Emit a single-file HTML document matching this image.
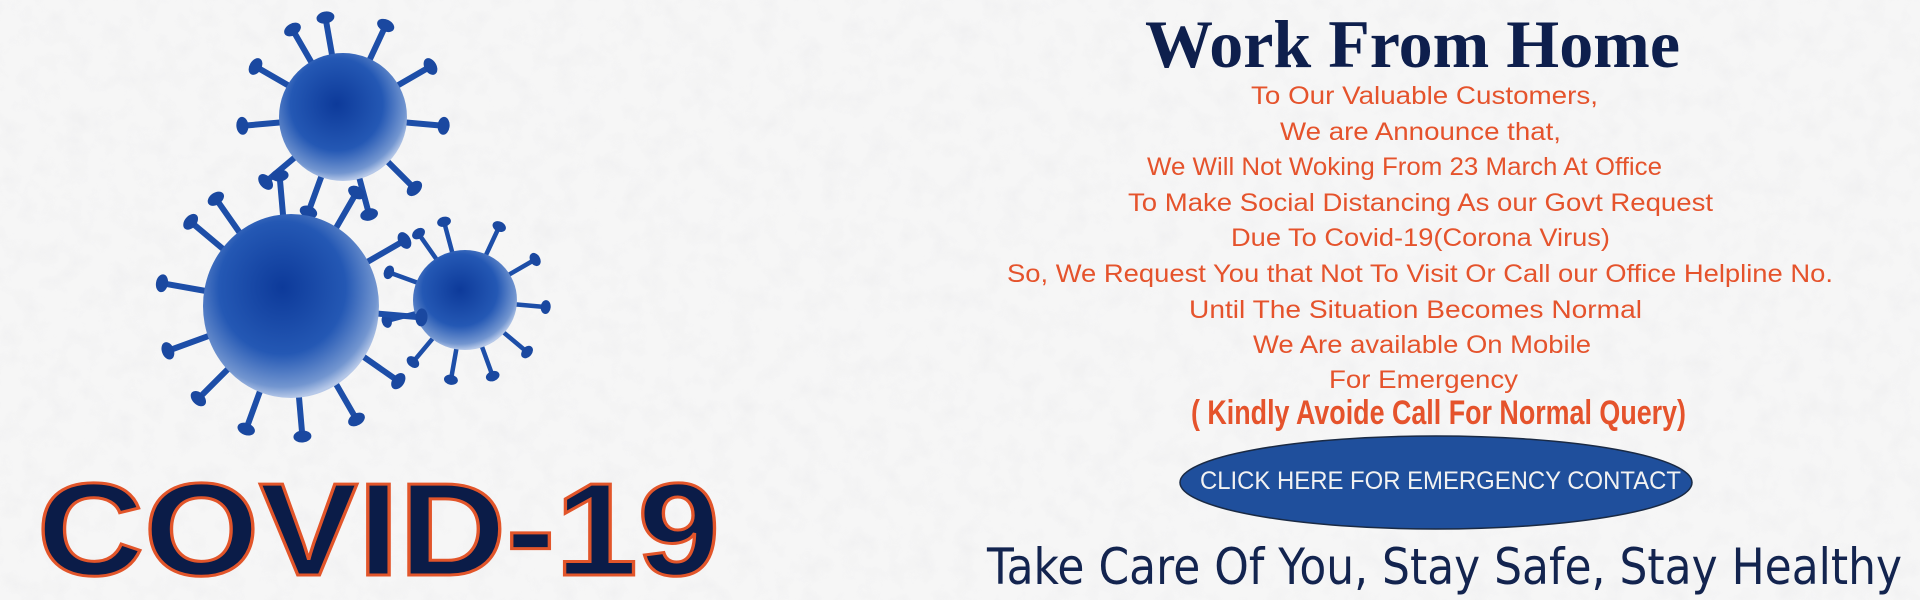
<!DOCTYPE html>
<html><head><meta charset="utf-8"><style>
html,body{margin:0;padding:0;width:1920px;height:600px;overflow:hidden;background:#f3f3f3}
svg{display:block}
</style></head><body>
<svg width="1920" height="600" viewBox="0 0 1920 600" xmlns="http://www.w3.org/2000/svg">
<defs>
<filter id="tex" x="0" y="0" width="100%" height="100%">
<feTurbulence type="fractalNoise" baseFrequency="0.045" numOctaves="3" seed="3"/>
<feColorMatrix type="matrix" values="0 0 0 0 0.86  0 0 0 0 0.86  0 0 0 0 0.87  0 0 0 -2.2 1.3"/>
</filter>
<radialGradient id="vg" cx="45%" cy="40%" r="60%">
<stop offset="0" stop-color="#0d3a9a"/>
<stop offset="0.6" stop-color="#2458b4"/>
<stop offset="0.9" stop-color="#7396d0"/>
<stop offset="1" stop-color="#b6c8e8"/>
</radialGradient>
<g id="sp"><line x1="0" y1="0" x2="0" y2="-44" stroke="#1d4ea8" stroke-width="6" stroke-linecap="round"/><ellipse cx="0" cy="-46" rx="9" ry="6" fill="#1a48a0"/></g>
<g id="spS"><line x1="0" y1="0" x2="0" y2="-34" stroke="#1d4ea8" stroke-width="4.5" stroke-linecap="round"/><ellipse cx="0" cy="-36" rx="7" ry="5" fill="#1a48a0"/></g>
</defs>
<rect width="1920" height="600" fill="#f6f6f6"/>
<rect width="1920" height="600" filter="url(#tex)" opacity="0.6"/>

<g transform="translate(343,117)">
<use href="#sp" transform="rotate(-10) translate(0,-55)"/>
<use href="#sp" transform="rotate(25) translate(0,-55)"/>
<use href="#sp" transform="rotate(60) translate(0,-55)"/>
<use href="#sp" transform="rotate(95) translate(0,-55)"/>
<use href="#sp" transform="rotate(135) translate(0,-55)"/>
<use href="#sp" transform="rotate(165) translate(0,-55)"/>
<use href="#sp" transform="rotate(200) translate(0,-55)"/>
<use href="#sp" transform="rotate(230) translate(0,-55)"/>
<use href="#sp" transform="rotate(265) translate(0,-55)"/>
<use href="#sp" transform="rotate(300) translate(0,-55)"/>
<use href="#sp" transform="rotate(330) translate(0,-55)"/>
<ellipse cx="0" cy="0" rx="64" ry="64" fill="url(#vg)"/>
</g>
<g transform="translate(465,300)">
<use href="#spS" transform="rotate(-15) translate(0,-45)"/>
<use href="#spS" transform="rotate(25) translate(0,-45)"/>
<use href="#spS" transform="rotate(60) translate(0,-45)"/>
<use href="#spS" transform="rotate(95) translate(0,-45)"/>
<use href="#spS" transform="rotate(130) translate(0,-45)"/>
<use href="#spS" transform="rotate(160) translate(0,-45)"/>
<use href="#spS" transform="rotate(190) translate(0,-45)"/>
<use href="#spS" transform="rotate(220) translate(0,-45)"/>
<use href="#spS" transform="rotate(255) translate(0,-45)"/>
<use href="#spS" transform="rotate(290) translate(0,-45)"/>
<use href="#spS" transform="rotate(325) translate(0,-45)"/>
<ellipse cx="0" cy="0" rx="52" ry="50" fill="url(#vg)"/>
</g>
<g transform="translate(291,306)">
<use href="#sp" transform="rotate(-35) translate(0,-85)"/>
<use href="#sp" transform="rotate(-5) translate(0,-85)"/>
<use href="#sp" transform="rotate(30) translate(0,-85)"/>
<use href="#sp" transform="rotate(60) translate(0,-85)"/>
<use href="#sp" transform="rotate(95) translate(0,-85)"/>
<use href="#sp" transform="rotate(125) translate(0,-85)"/>
<use href="#sp" transform="rotate(150) translate(0,-85)"/>
<use href="#sp" transform="rotate(175) translate(0,-85)"/>
<use href="#sp" transform="rotate(200) translate(0,-85)"/>
<use href="#sp" transform="rotate(225) translate(0,-85)"/>
<use href="#sp" transform="rotate(250) translate(0,-85)"/>
<use href="#sp" transform="rotate(280) translate(0,-85)"/>
<use href="#sp" transform="rotate(310) translate(0,-85)"/>
<ellipse cx="0" cy="0" rx="88" ry="92" fill="url(#vg)"/>
</g>

<text x="37" y="575" font-family="Liberation Sans, sans-serif" font-weight="900" font-size="132" fill="#0b1c48" stroke="#e2552a" stroke-width="3" textLength="683" lengthAdjust="spacingAndGlyphs">COVID-19</text>

<text x="1145" y="67" font-family="Liberation Serif, serif" font-weight="bold" font-size="68" fill="#0e1f4d" textLength="535" lengthAdjust="spacingAndGlyphs">Work From Home</text>

<g font-family="Liberation Sans, sans-serif" font-size="25" fill="#e5532c">
<text x="1251" y="104" textLength="347" lengthAdjust="spacingAndGlyphs">To Our Valuable Customers,</text>
<text x="1280" y="140" textLength="281" lengthAdjust="spacingAndGlyphs">We are Announce that,</text>
<text x="1147" y="175" textLength="515" lengthAdjust="spacingAndGlyphs">We Will Not Woking From 23  March At Office</text>
<text x="1128" y="211" textLength="585" lengthAdjust="spacingAndGlyphs">To Make Social Distancing As our Govt  Request</text>
<text x="1231" y="246" textLength="379" lengthAdjust="spacingAndGlyphs">Due To Covid-19(Corona Virus)</text>
<text x="1007" y="282" textLength="826" lengthAdjust="spacingAndGlyphs">So, We Request You that Not To Visit Or Call our Office Helpline No.</text>
<text x="1189" y="318" textLength="453" lengthAdjust="spacingAndGlyphs">Until The Situation Becomes Normal</text>
<text x="1253" y="353" textLength="338" lengthAdjust="spacingAndGlyphs">We Are available On Mobile</text>
<text x="1329" y="388" textLength="189" lengthAdjust="spacingAndGlyphs">For Emergency</text>
</g>
<text x="1191" y="424" font-family="Liberation Sans, sans-serif" font-weight="bold" font-size="34" fill="#e5532c" textLength="495" lengthAdjust="spacingAndGlyphs">( Kindly Avoide Call For Normal Query)</text>

<ellipse cx="1436" cy="482.5" rx="256" ry="46.5" fill="#1f4f9c" stroke="#1a2a44" stroke-width="1.5"/>
<text x="1200" y="489" font-family="Liberation Sans, sans-serif" font-size="25" fill="#f2f2f2" textLength="481" lengthAdjust="spacingAndGlyphs">CLICK HERE FOR EMERGENCY  CONTACT</text>

<text x="987" y="584" font-family="DejaVu Sans, Liberation Sans, sans-serif" font-size="50" fill="#13244f" textLength="915" lengthAdjust="spacingAndGlyphs">Take Care Of You, Stay Safe, Stay Healthy</text>
</svg>
</body></html>
